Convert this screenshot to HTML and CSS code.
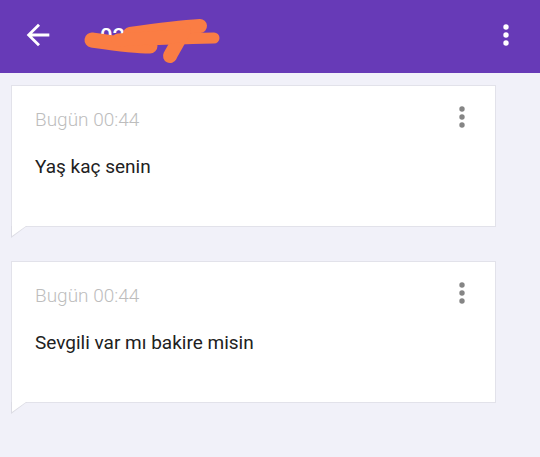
FILE: index.html
```html
<!DOCTYPE html>
<html lang="tr">
<head>
  <meta charset="UTF-8">
  <meta name="viewport" content="width=device-width, initial-scale=1.0">
  <title>Mesajlar</title>
  <link rel="stylesheet" href="styles.css">
</head>
<body>
  <header class="topbar">
    <button class="icon-btn back">
      <svg width="34" height="34" viewBox="0 0 24 24"><path d="M20 11H7.83l5.59-5.59L12 4l-8 8 8 8 1.41-1.41L7.83 13H20v-2z" fill="#fff"/></svg>
    </button>
    <div class="title">
      <span>02 ***</span>
      <svg class="scribble" width="150" height="73" viewBox="0 0 150 73">
        <g stroke="#fa7d44" stroke-linecap="round" fill="none">
          <path d="M14 40 C35 43 55 46 72 46" stroke-width="15"/>
          <path d="M52 34 C80 30 105 27 122 26" stroke-width="14"/>
          <path d="M70 40 C100 39 120 38 136 38" stroke-width="11"/>
          <path d="M106 30 C100 42 94 52 92 56" stroke-width="14"/>
          <path d="M40 40 L104 36" stroke-width="13"/>
        </g>
      </svg>
    </div>
    <button class="icon-btn more">
      <svg width="6" height="22" viewBox="0 0 6 22"><circle cx="3" cy="3" r="2.7" fill="#fff"/><circle cx="3" cy="11" r="2.7" fill="#fff"/><circle cx="3" cy="19" r="2.7" fill="#fff"/></svg>
    </button>
  </header>

  <main class="messages">
    <div class="bubble">
      <div class="bubble-head">
        <span class="time">Bugün 00:44</span>
        <svg class="dots" width="6" height="22" viewBox="0 0 6 22"><circle cx="3" cy="3" r="2.7"/><circle cx="3" cy="11" r="2.7"/><circle cx="3" cy="19" r="2.7"/></svg>
      </div>
      <p class="text">Yaş kaç senin</p>
    </div>

    <div class="bubble">
      <div class="bubble-head">
        <span class="time">Bugün 00:44</span>
        <svg class="dots" width="6" height="22" viewBox="0 0 6 22"><circle cx="3" cy="3" r="2.7"/><circle cx="3" cy="11" r="2.7"/><circle cx="3" cy="19" r="2.7"/></svg>
      </div>
      <p class="text">Sevgili var mı bakire misin</p>
    </div>
  </main>
</body>
</html>
```

FILE: styles.css
```css
body {
  margin: 0;
  font-family: Roboto, "Noto Sans", sans-serif;
  background-color: #f1f1f9;
  color: #212121;
}
.topbar {
  height: 73px;
  background-color: #673ab7;
  display: flex;
  align-items: center;
  padding: 0 31px 0 21px;
  box-sizing: border-box;
}
.icon-btn {
  background: none;
  border: 0;
  padding: 0;
  display: flex;
  align-items: center;
  cursor: pointer;
}
.back {
  margin-top: -4px;
}
.title {
  position: relative;
  flex: 1;
  margin-left: 45px;
  color: #fff;
  font-size: 22px;
  line-height: 26px;
  font-weight: 500;
}
.scribble {
  position: absolute;
  left: -22px;
  top: -24px;
}
.more {
  margin-top: -4px;
}
.messages {
  padding: 12px 0 0 11px;
}
.bubble {
  position: relative;
  width: 485px;
  height: 142px;
  background: #fff;
  border: 1px solid #e2e2ea;
  margin-bottom: 34px;
  padding: 22px 0 0 23px;
  box-sizing: border-box;
}
.bubble::after {
  content: "";
  position: absolute;
  left: 0;
  bottom: -10px;
  width: 0;
  height: 0;
  border-top: 10px solid #fff;
  border-right: 14px solid transparent;
}
.bubble::before {
  content: "";
  position: absolute;
  left: -1px;
  bottom: -12px;
  width: 0;
  height: 0;
  border-top: 12px solid #dcdce4;
  border-right: 16px solid transparent;
}
.bubble-head {
  display: flex;
  justify-content: space-between;
  align-items: flex-start;
  padding-right: 30px;
}
.time {
  font-size: 19px;
  line-height: 24px;
  font-weight: 300;
  color: #bdbdbd;
}
.dots {
  fill: #858585;
  margin-top: -2px;
}
.text {
  margin: 23px 0 0;
  font-size: 19px;
  line-height: 24px;
  color: #212121;
}
```
